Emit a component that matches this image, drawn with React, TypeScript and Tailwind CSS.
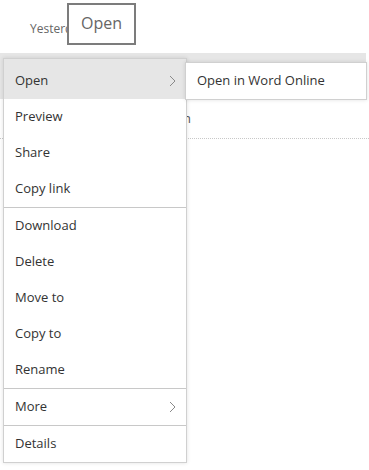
import React from 'react';

const font = { fontFamily: '"Open Sans", "Noto Sans", sans-serif' };

const Chevron = () => (
  <svg width="7" height="12" viewBox="0 0 7 12" className="text-[#8a8a8a]">
    <path d="M1 1 L6 6 L1 11" fill="none" stroke="currentColor" strokeWidth="1" />
  </svg>
);

type Item = { label: string; sub?: boolean; divider?: boolean; active?: boolean };

const items: Item[] = [
  { label: 'Open', sub: true, active: true },
  { label: 'Preview' },
  { label: 'Share' },
  { label: 'Copy link', divider: true },
  { label: 'Download' },
  { label: 'Delete' },
  { label: 'Move to' },
  { label: 'Copy to' },
  { label: 'Rename', divider: true },
  { label: 'More', sub: true, divider: true },
  { label: 'Details' },
];

const App = () => {
  return (
    <div className="relative w-[369px] h-[470px] bg-white overflow-hidden text-[#333]" style={font}>
      {/* file list behind */}
      <div className="h-[53px] flex items-center pl-[30px] pt-[4px] text-[12px] text-[#666]">
        Yesterday 2:41 PM
      </div>
      <div className="h-[46px] bg-[#e6e6e6] mr-[3px]" />
      <div className="h-[40px] border-b border-dotted border-[#c8c8c8] flex items-center">
        <div className="w-[191px] text-right text-[13px] text-[#555]">Design</div>
      </div>

      {/* tooltip */}
      <div className="absolute left-[67px] top-[3px] w-[69px] h-[42px] border-2 border-[#7c7c7c] bg-white flex items-center justify-center text-[16px] text-[#666] pb-[3px]">
        Open
      </div>

      {/* context menu */}
      <div className="absolute left-[3px] top-[58px] w-[184px] bg-white border border-[#d0d0d0] shadow-[0_0_4px_rgba(0,0,0,0.12)]">
        {items.map((it) => (
          <div key={it.label}>
            <div
              className={`flex items-center justify-between pl-[11px] pr-[10px] text-[13px] ${
                it.active ? 'h-[40px] pt-[4px] bg-[#e6e6e6]' : 'h-[36px]'
              }`}
            >
              <span>{it.label}</span>
              {it.sub && <Chevron />}
            </div>
            {it.divider && <div className="h-px bg-[#c8c8c8]" />}
          </div>
        ))}
      </div>

      {/* submenu */}
      <div className="absolute left-[185px] top-[62px] w-[182px] h-[38px] bg-white border border-[#d0d0d0] shadow-[0_0_4px_rgba(0,0,0,0.12)] flex items-center pl-[11px] text-[13px]">
        Open in Word Online
      </div>
    </div>
  );
};

export default App;
